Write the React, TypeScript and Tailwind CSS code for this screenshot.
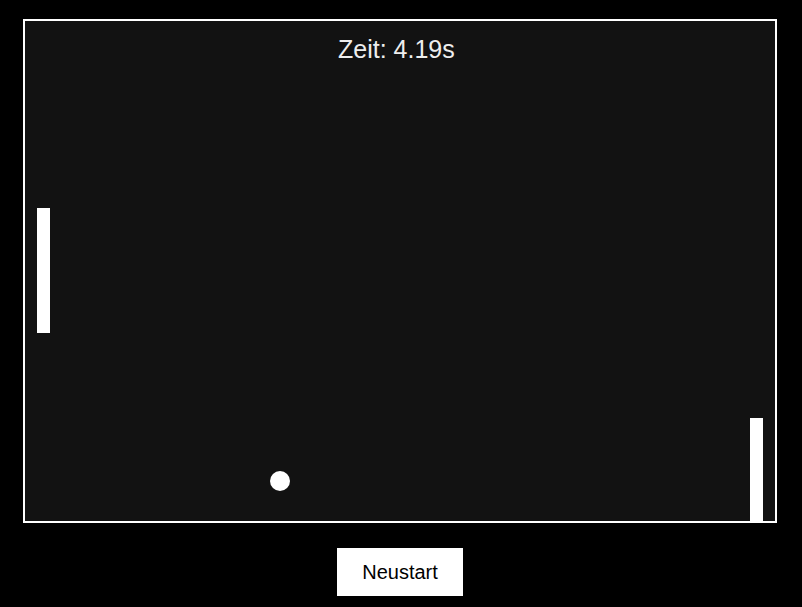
const App: React.FC = () => {
  return (
    <div className="min-h-screen w-full bg-black font-['Liberation_Sans',Arial,sans-serif]">
      <div className="w-[800px] flex flex-col items-center pt-[19px]">
        {/* Spielfeld */}
        <div className="relative w-[754px] h-[504px] border-2 border-white bg-[#121212] overflow-hidden">
          <div className="absolute left-[313px] top-[16px] text-[25px] leading-none text-[#eeeeee]">
            Zeit: 4.19s
          </div>

          {/* Schläger */}
          <div className="absolute left-[12px] top-[187px] w-[13px] h-[125px] bg-white" />
          <div className="absolute left-[725px] top-[397px] w-[13px] h-[125px] bg-white" />

          {/* Ball */}
          <div className="absolute left-[245px] top-[450px] w-[20px] h-[20px] rounded-full bg-white" />
        </div>

        <button className="mt-[25px] w-[126px] h-[48px] bg-white text-black text-[20px] leading-none">
          Neustart
        </button>
      </div>
    </div>
  );
};

export default App;
